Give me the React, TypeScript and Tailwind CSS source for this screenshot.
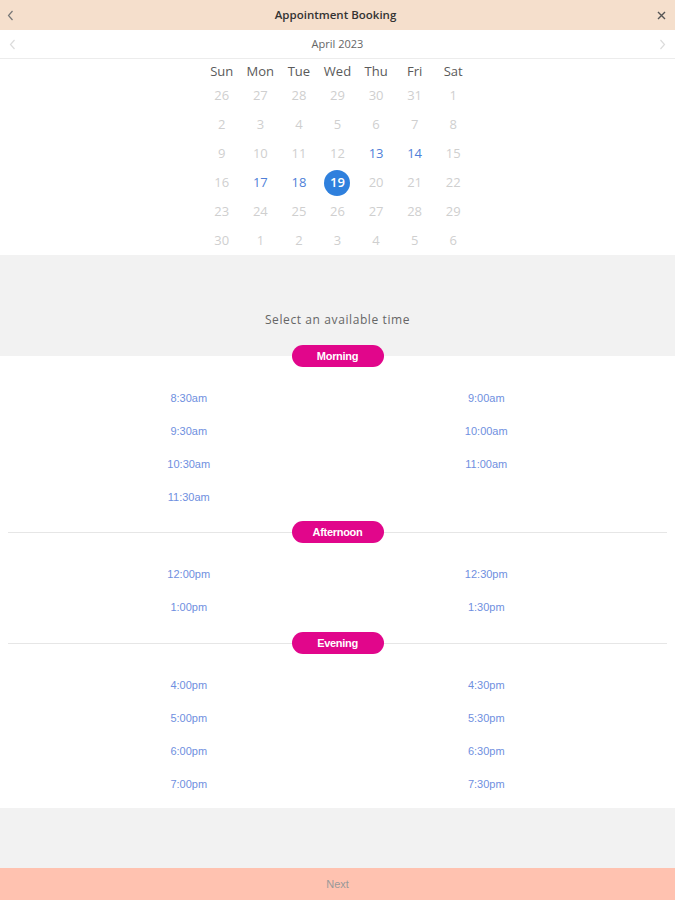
const days = ["Sun", "Mon", "Tue", "Wed", "Thu", "Fri", "Sat"];

const weeks: number[][] = [
  [26, 27, 28, 29, 30, 31, 1],
  [2, 3, 4, 5, 6, 7, 8],
  [9, 10, 11, 12, 13, 14, 15],
  [16, 17, 18, 19, 20, 21, 22],
  [23, 24, 25, 26, 27, 28, 29],
  [30, 1, 2, 3, 4, 5, 6],
];

const available = [13, 14, 17, 18];
const selected = 19;

const slots = {
  Morning: ["8:30am", "9:00am", "9:30am", "10:00am", "10:30am", "11:00am", "11:30am"],
  Afternoon: ["12:00pm", "12:30pm", "1:00pm", "1:30pm"],
  Evening: ["4:00pm", "4:30pm", "5:00pm", "5:30pm", "6:00pm", "6:30pm", "7:00pm", "7:30pm"],
};

function Chevron({ dir, className }: { dir: "left" | "right"; className?: string }) {
  return (
    <svg width="7" height="11" viewBox="0 0 7 11" className={className}>
      <path
        d={dir === "left" ? "M5.5 1 L1.5 5.5 L5.5 10" : "M1.5 1 L5.5 5.5 L1.5 10"}
        fill="none"
        stroke="currentColor"
        strokeWidth="1.2"
      />
    </svg>
  );
}

function Pill({ label }: { label: string }) {
  return (
    <div className="flex h-[22px] w-[92px] items-center justify-center rounded-full bg-[#e1068b] text-[11px] font-bold tracking-[-0.3px] text-white">
      {label}
    </div>
  );
}

function Slots({ times }: { times: string[] }) {
  return (
    <div className="mt-[15px] grid grid-cols-2 px-[40px]">
      {times.map((t) => (
        <div key={t} className="flex h-[33px] items-center justify-center text-[11px] text-[#6f8fe0]">
          {t}
        </div>
      ))}
    </div>
  );
}

function Divider({ label }: { label: string }) {
  return (
    <div className="mx-2 flex h-[22px] items-center">
      <div className="h-px flex-1 bg-[#e6e6e6]" />
      <Pill label={label} />
      <div className="h-px flex-1 bg-[#e6e6e6]" />
    </div>
  );
}

export default function App() {
  return (
    <div className="flex h-[900px] w-[675px] flex-col bg-white font-['Liberation_Sans',sans-serif]">
      {/* header */}
      <div className="flex h-[30px] items-center justify-between bg-[#f5dfcc] pl-[7px] pr-[9px]">
        <Chevron dir="left" className="text-[#777]" />
        <span className="font-['Open_Sans',sans-serif] text-[11.5px] font-semibold text-[#333]">
          Appointment Booking
        </span>
        <svg width="9" height="9" viewBox="0 0 9 9" className="text-[#555]">
          <path d="M1 1 L8 8 M8 1 L1 8" stroke="currentColor" strokeWidth="1.4" />
        </svg>
      </div>

      {/* month */}
      <div className="flex h-[29px] items-center justify-between border-b border-[#ececec] px-[9px]">
        <Chevron dir="left" className="text-[#dcdcdc]" />
        <span className="pt-px font-['Open_Sans',sans-serif] text-[11px] text-[#666]">April 2023</span>
        <Chevron dir="right" className="text-[#dcdcdc]" />
      </div>

      {/* calendar */}
      <div className="mx-auto w-[270px] font-['Open_Sans',sans-serif]">
        <div className="grid h-[22px] grid-cols-7 items-center pt-[3px]">
          {days.map((d) => (
            <div key={d} className="text-center text-[13px] text-[#5a5a5a]">
              {d}
            </div>
          ))}
        </div>
        {weeks.map((w, i) => (
          <div key={i} className="grid h-[29px] grid-cols-7 items-center">
            {w.map((n, j) => {
              const inMonth = !(i === 0 && n > 7) && !(i === 5 && n < 7);
              const isSel = inMonth && n === selected;
              const isAvail = inMonth && available.includes(n);
              return (
                <div key={j} className="flex justify-center">
                  {isSel ? (
                    <span className="flex h-[26px] w-[26px] items-center justify-center rounded-full bg-[#2f80dd] text-[13px] font-semibold text-white">
                      {n}
                    </span>
                  ) : (
                    <span
                      className={
                        isAvail
                          ? "text-[13px] text-[#4f7fd8]"
                          : "text-[13px] text-[#cfcfcf]"
                      }
                    >
                      {n}
                    </span>
                  )}
                </div>
              );
            })}
          </div>
        ))}
      </div>

      {/* prompt */}
      <div className="flex h-[101px] items-start justify-center bg-[#f2f2f2] pt-[56px]">
        <span className="font-['Open_Sans',sans-serif] text-[12px] tracking-[0.6px] text-[#666]">
          Select an available time
        </span>
      </div>

      {/* slots */}
      <div className="bg-white pb-[7px]">
        <div className="relative -mt-[11px] flex justify-center">
          <Pill label="Morning" />
        </div>
        <Slots times={slots.Morning} />
        <div className="mt-[7px]">
          <Divider label="Afternoon" />
        </div>
        <Slots times={slots.Afternoon} />
        <div className="mt-[8px]">
          <Divider label="Evening" />
        </div>
        <Slots times={slots.Evening} />
      </div>

      <div className="flex-1 bg-[#f2f2f2]" />

      <div className="flex h-[32px] items-center justify-center bg-[#ffc2b0] text-[11px] text-[#999]">
        Next
      </div>
    </div>
  );
}
